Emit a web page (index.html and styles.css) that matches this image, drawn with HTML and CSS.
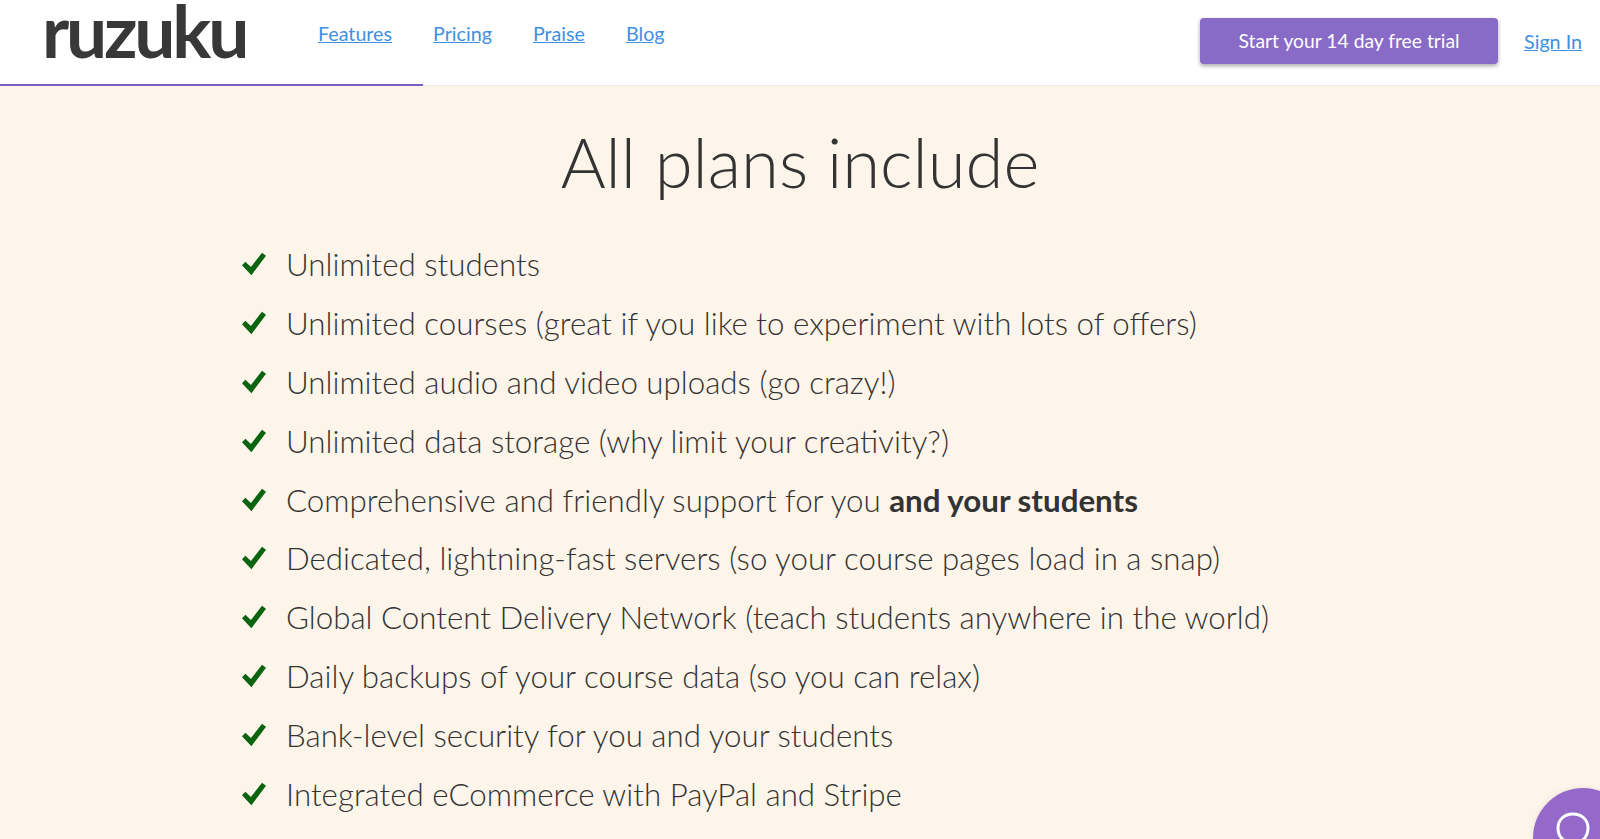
FILE: index.html
```html
<!DOCTYPE html>
<html lang="en">
<head>
    <meta charset="UTF-8">
    <meta name="viewport" content="width=device-width, initial-scale=1.0">
    <title>ruzuku - All plans include</title>
    <link rel="stylesheet" href="styles.css">
</head>
<body>
    <header class="topbar">
        <a class="logo" href="#">ruzuku</a>
        <nav class="nav-links">
            <a href="#">Features</a>
            <a href="#">Pricing</a>
            <a href="#">Praise</a>
            <a href="#">Blog</a>
        </nav>
        <div class="topbar-right">
            <a class="trial-button" href="#">Start your 14 day free trial</a>
            <a class="sign-in" href="#">Sign In</a>
        </div>
        <div class="progress"></div>
    </header>
    <main class="plans">
        <h1>All plans include</h1>
        <ul class="features">
            <li><svg class="check" viewBox="0 0 24 24"><path d="M0 13.2 L3.4 9.8 L8.9 15 L20 0.8 L24 3.8 L9.4 23.2 Z"/></svg>Unlimited students</li>
            <li><svg class="check" viewBox="0 0 24 24"><path d="M0 13.2 L3.4 9.8 L8.9 15 L20 0.8 L24 3.8 L9.4 23.2 Z"/></svg>Unlimited courses (great if you like to experiment with lots of offers)</li>
            <li><svg class="check" viewBox="0 0 24 24"><path d="M0 13.2 L3.4 9.8 L8.9 15 L20 0.8 L24 3.8 L9.4 23.2 Z"/></svg>Unlimited audio and video uploads (go crazy!)</li>
            <li><svg class="check" viewBox="0 0 24 24"><path d="M0 13.2 L3.4 9.8 L8.9 15 L20 0.8 L24 3.8 L9.4 23.2 Z"/></svg>Unlimited data storage (why limit your creativity?)</li>
            <li><svg class="check" viewBox="0 0 24 24"><path d="M0 13.2 L3.4 9.8 L8.9 15 L20 0.8 L24 3.8 L9.4 23.2 Z"/></svg>Comprehensive and friendly support for you&nbsp;<strong>and your students</strong></li>
            <li><svg class="check" viewBox="0 0 24 24"><path d="M0 13.2 L3.4 9.8 L8.9 15 L20 0.8 L24 3.8 L9.4 23.2 Z"/></svg>Dedicated, lightning-fast servers (so your course pages load in a snap)</li>
            <li><svg class="check" viewBox="0 0 24 24"><path d="M0 13.2 L3.4 9.8 L8.9 15 L20 0.8 L24 3.8 L9.4 23.2 Z"/></svg>Global Content Delivery Network (teach students anywhere in the world)</li>
            <li><svg class="check" viewBox="0 0 24 24"><path d="M0 13.2 L3.4 9.8 L8.9 15 L20 0.8 L24 3.8 L9.4 23.2 Z"/></svg>Daily backups of your course data (so you can relax)</li>
            <li><svg class="check" viewBox="0 0 24 24"><path d="M0 13.2 L3.4 9.8 L8.9 15 L20 0.8 L24 3.8 L9.4 23.2 Z"/></svg>Bank-level security for you and your students</li>
            <li><svg class="check" viewBox="0 0 24 24"><path d="M0 13.2 L3.4 9.8 L8.9 15 L20 0.8 L24 3.8 L9.4 23.2 Z"/></svg>Integrated eCommerce with PayPal and Stripe</li>
        </ul>
    </main>
    <button class="chat-bubble">
        <svg viewBox="0 0 40 40"><path d="M20 4 C29 4 35 10 35 18 C35 23 33 27 30 30 L31 36 L25 32 C23 33 22 33 20 33 C11 33 5 27 5 18 C5 10 11 4 20 4 Z"/></svg>
    </button>
</body>
</html>
```

FILE: styles.css
```css
html, body {
    height: 100%;
}
body {
    font-family: Lato, "Open Sans", sans-serif;
    margin: 0;
    padding: 0;
    background-color: #fdf4ea;
    color: #333;
    overflow: hidden;
}
a {
    color: #3f8fe2;
}
.topbar {
    position: relative;
    display: flex;
    height: 85px;
    background: #fff;
    border-bottom: 1px solid #eeeae6;
}
.logo {
    margin-left: 42px;
    width: 276px;
    height: 60px;
    font-size: 73px;
    font-weight: 700;
    line-height: 60px;
    letter-spacing: -3.2px;
    color: #383838;
    text-decoration: none;
}
.nav-links {
    display: flex;
    gap: 41px;
    padding-top: 21px;
    font-size: 19.7px;
    line-height: 26px;
}
.topbar-right {
    display: flex;
    align-items: center;
    margin-left: auto;
    margin-right: 18px;
    padding-bottom: 3px;
    gap: 26px;
    font-size: 19.7px;
}
.trial-button {
    width: 298px;
    height: 46px;
    font-size: 19.3px;
    line-height: 46px;
    text-align: center;
    background: #886bc7;
    border-radius: 4px;
    color: #fff;
    text-decoration: none;
    box-shadow: 0 2px 4px rgba(0, 0, 0, 0.35);
}
.progress {
    position: absolute;
    left: 0;
    bottom: -1px;
    width: 423px;
    height: 2px;
    background: #7e5cc4;
}
.plans h1 {
    margin: 0;
    padding-top: 33px;
    text-align: center;
    font-size: 68.8px;
    font-weight: 300;
    line-height: 86px;
}
.features {
    list-style: none;
    margin: 0;
    padding: 30px 0 0 241px;
    font-size: 31.3px;
    font-weight: 300;
}
.features li {
    display: flex;
    align-items: center;
    height: 58.8px;
    white-space: pre;
}
.features strong {
    font-weight: 700;
}
.check {
    width: 26px;
    height: 24px;
    margin-right: 19px;
    fill: #0a640f;
}
.chat-bubble {
    position: fixed;
    left: 1533px;
    bottom: -49px;
    width: 100px;
    height: 100px;
    padding: 0;
    border: none;
    border-radius: 50%;
    background: #9469c9;
    box-shadow: 0 0 6px rgba(0, 0, 0, 0.08);
}
.chat-bubble svg {
    position: absolute;
    left: 20px;
    top: 22px;
    width: 40px;
    height: 40px;
    fill: none;
    stroke: #fff;
    stroke-width: 3;
}
```
